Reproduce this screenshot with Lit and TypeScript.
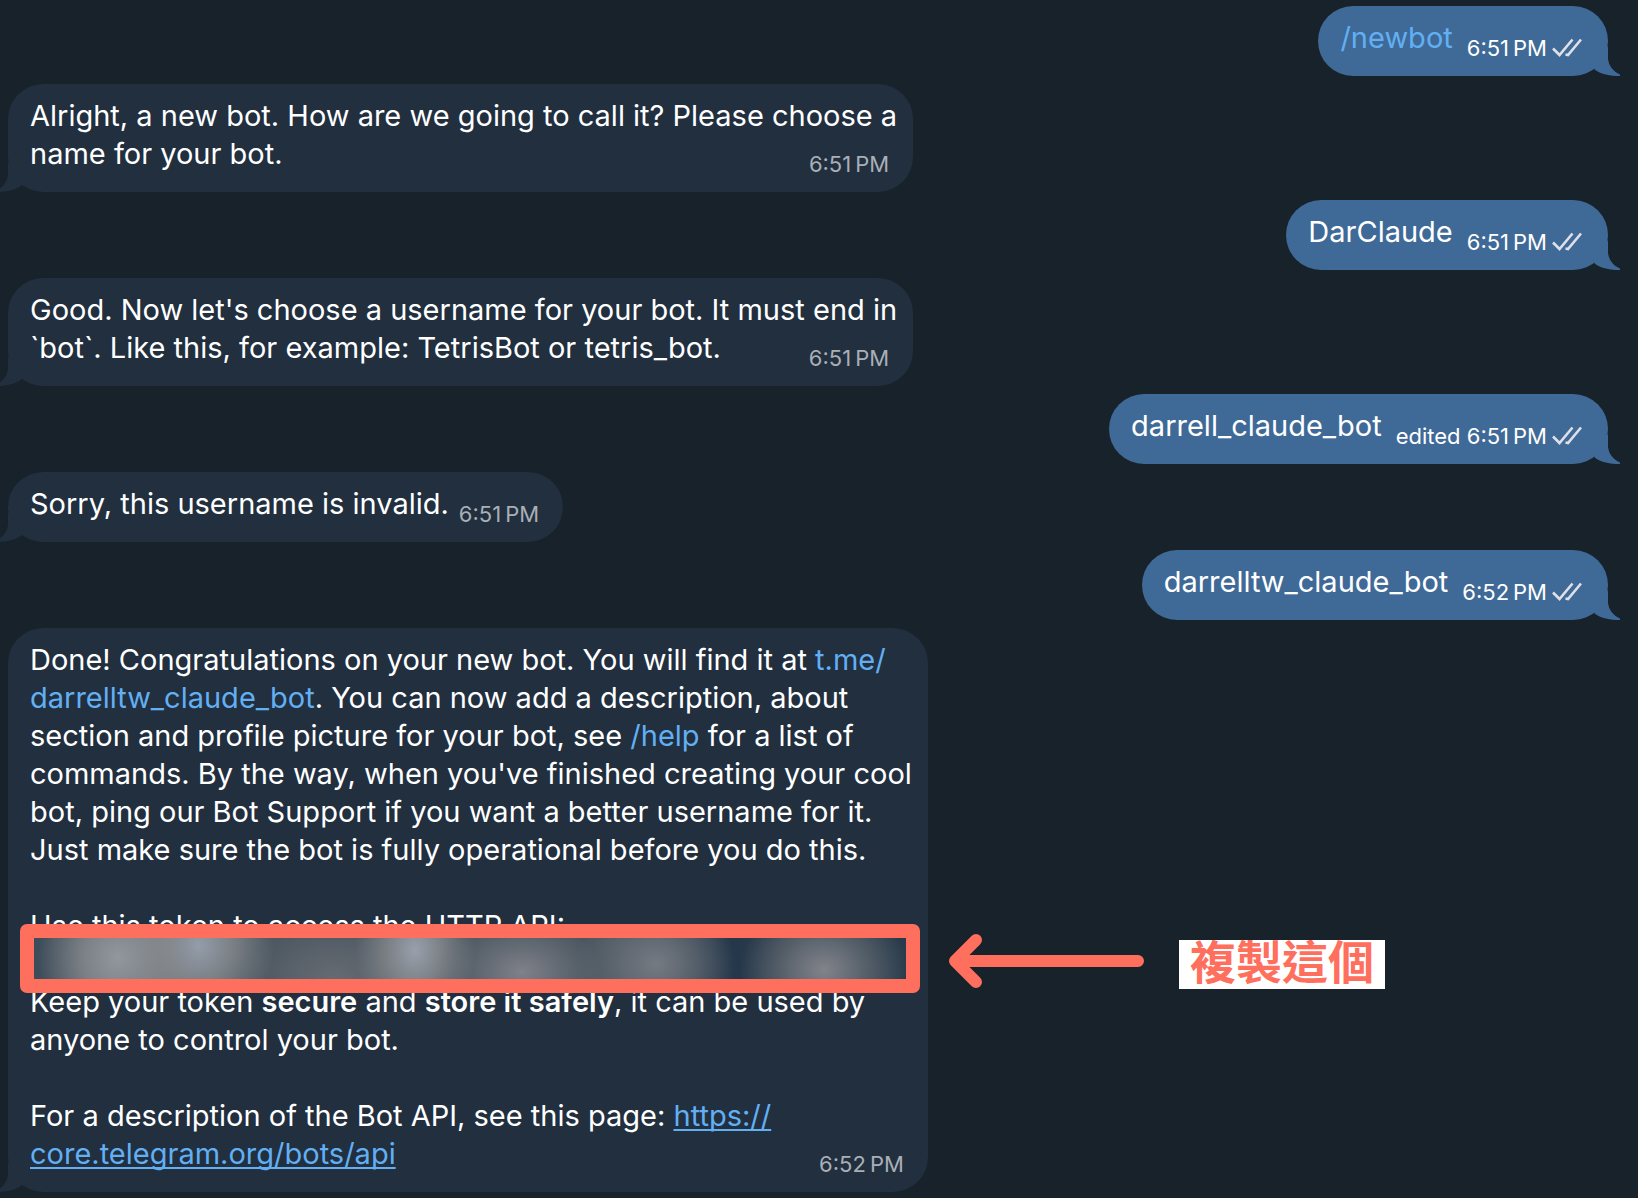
import { LitElement, html, css, svg, nothing, TemplateResult } from "lit";
import { customElement, property } from "lit/decorators.js";

@customElement("chat-message")
class ChatMessage extends LitElement {
  @property() side: "in" | "out" = "in";
  @property() time = "";
  @property({ type: Boolean }) edited = false;
  @property({ type: Boolean }) multiline = false;

  static styles = css`
    :host {
      display: flex;
    }
    :host([side="out"]) {
      justify-content: flex-end;
    }
    .bubble {
      position: relative;
      display: flex;
      gap: 10px;
      padding: 13px 22px 19px;
      border-radius: 35px;
      background: #212f3f;
      color: #fff;
    }
    .bubble.out {
      gap: 14px;
      background: #3f6a97;
    }
    .bubble.multiline {
      display: grid;
      padding-right: 16px;
    }
    .multiline .body,
    .multiline .meta {
      grid-area: 1 / 1;
    }
    .meta {
      display: flex;
      align-items: center;
      align-self: end;
      justify-self: end;
      gap: 5px;
      padding-right: 2px;
      font-size: 22px;
      line-height: 24px;
      white-space: nowrap;
      color: #a9afb6;
      transform: translateY(3px);
    }
    .multiline .meta {
      padding-right: 8px;
    }
    .out .meta {
      padding-right: 4px;
      color: #fff;
    }
    .checks {
      width: 30px;
      height: 20px;
      fill: none;
      stroke: #dfdfe8;
      stroke-width: 2.600;
    }
    .tail {
      position: absolute;
      bottom: 0;
      left: -12px;
      width: 30px;
      height: 30px;
      fill: #212f3f;
      transform: scaleX(-1);
    }
    .out .tail {
      left: auto;
      right: -12px;
      fill: #3f6a97;
      transform: none;
    }
  `;

  render() {
    const kind = `bubble ${this.side}${this.multiline ? " multiline" : ""}`;
    return html`
      <article class=${kind}>
        <svg class="tail" viewBox="0 0 30 30" aria-hidden="true">
          <path d="M18 0V13C19 20 23 25.500 30 28.500V30C20 30 11 28.500 4 23L10 12Z" />
        </svg>
        <div class="body"><slot></slot></div>
        <div class="meta">
          <span>${this.edited ? "edited " : nothing}<time>${this.time}</time></span>
          ${this.side === "out"
            ? html`<svg class="checks" viewBox="0 0 30 20" role="img" aria-label="Read">
                ${svg`<path d="M1 10.500L7.500 17L20.500 1.500M13.500 16.500L16 17L29 1.500" />`}
              </svg>`
            : nothing}
        </div>
      </article>
    `;
  }
}

interface Message {
  side: "in" | "out";
  time: string;
  body: TemplateResult;
  edited?: boolean;
  multiline?: boolean;
}

@customElement("app-root")
class AppRoot extends LitElement {
  static styles = css`
    :host {
      display: block;
      font-family: Inter, "Noto Sans CJK TC", sans-serif;
      font-size: 29px;
      line-height: 38px;
    }
    .chat {
      display: flex;
      flex-direction: column;
      gap: 8px;
      min-height: 100vh;
      box-sizing: border-box;
      padding: 6px 30px 6px 8px;
      background: #17222b;
      overflow: hidden;
    }
    p {
      margin: 0;
      white-space: nowrap;
    }
    p + p {
      margin-top: 38px;
    }
    a {
      color: #62b0f3;
      text-decoration: none;
    }
    a.url {
      text-decoration: underline 2px;
      text-decoration-skip-ink: none;
      text-underline-offset: 3px;
    }
    b {
      font-weight: 600;
    }
    .token {
      position: relative;
      display: block;
      height: 38px;
    }
    .callout {
      position: absolute;
      top: -21px;
      left: -10px;
      display: flex;
      align-items: center;
    }
    .frame {
      box-sizing: border-box;
      width: 900px;
      height: 69px;
      border: 14px solid #ff6f5e;
      border-radius: 7px;
      background:
        radial-gradient(80px 90px at 84px 20px, #92979f, #8b8e92c0 45%, #8b8e9200),
        radial-gradient(76px 80px at 164px 8px, #949daa, #8b8e92c0 45%, #8b8e9200),
        radial-gradient(60px 80px at 381px 12px, #98a0ac, #8b8e92c0 45%, #8b8e9200),
        radial-gradient(90px 60px at 300px 40px, #666b72, #636a7300),
        radial-gradient(80px 56px at 488px 34px, #80818a, #70757ca0 50%, #70757c00),
        radial-gradient(80px 70px at 622px 26px, #767a82, #6a7178a0 50%, #6a717800),
        radial-gradient(84px 70px at 790px 32px, #82838b, #6e747ba0 50%, #6e747b00),
        linear-gradient(90deg, #3c4c5a, #4c5761 8%, #48545f 68%, #24364a 80%, #34434f 88%, #283a4b);
      background-origin: padding-box;
      background-clip: border-box;
    }
    .arrow {
      width: 198px;
      height: 56px;
      margin: 4px 0 0 28px;
      fill: none;
      stroke: #ff6f5e;
      stroke-width: 12;
      stroke-linecap: round;
      stroke-linejoin: round;
    }
    .label {
      height: 49px;
      margin: 12px 0 0 33px;
      padding: 0 11px;
      overflow: hidden;
      background: #fff;
      color: #ff6f5e;
      font-family: "Noto Sans CJK TC", sans-serif;
      font-size: 46px;
      font-weight: 700;
      line-height: 38px;
    }
  `;

  private messages: Message[] = [
    { side: "out", time: "6:51\u202fPM", body: html`<p><a href="#newbot">/newbot</a></p>` },
    {
      side: "in",
      time: "6:51\u202fPM",
      multiline: true,
      body: html`<p>
        Alright, a new bot. How are we going to call it? Please choose a<br />name for your bot.
      </p>`,
    },
    { side: "out", time: "6:51\u202fPM", body: html`<p>DarClaude</p>` },
    {
      side: "in",
      time: "6:51\u202fPM",
      multiline: true,
      body: html`<p>
        Good. Now let's choose a username for your bot. It must end in<br />\`bot\`. Like this, for
        example: TetrisBot or tetris_bot.
      </p>`,
    },
    { side: "out", time: "6:51\u202fPM", edited: true, body: html`<p>darrell_claude_bot</p>` },
    { side: "in", time: "6:51\u202fPM", body: html`<p>Sorry, this username is invalid.</p>` },
    { side: "out", time: "6:52\u202fPM", body: html`<p>darrelltw_claude_bot</p>` },
    {
      side: "in",
      time: "6:52\u202fPM",
      multiline: true,
      body: html`
        <p>
          Done! Congratulations on your new bot. You will find it at
          <a href="#bot">t.me/<br />darrelltw_claude_bot</a>. You can now add a description, about<br />section
          and profile picture for your bot, see <a href="#help">/help</a> for a list of<br />commands.
          By the way, when you've finished creating your cool<br />bot, ping our Bot Support if you
          want a better username for it.<br />Just make sure the bot is fully operational before you
          do this.
        </p>
        <p>
          Use this token to access the HTTP API:
          <span class="token">
            <span class="callout">
              <span class="frame"></span>
              <svg class="arrow" viewBox="0 0 198 56" aria-hidden="true">
                <path d="M190 28H8M28 7L7 28L28 49" />
              </svg>
              <span class="label" lang="zh-Hant">複製這個</span>
            </span>
          </span>
          Keep your token <b>secure</b> and <b>store it safely</b>, it can be used by<br />anyone to
          control your bot.
        </p>
        <p>
          For a description of the Bot API, see this page:
          <a class="url" href="#api">https://<br />core.telegram.org/bots/api</a>
        </p>
      `,
    },
  ];

  render() {
    return html`
      <main class="chat">
        ${this.messages.map(
          (m) => html`<chat-message
            side=${m.side}
            .time=${m.time}
            .edited=${m.edited ?? false}
            .multiline=${m.multiline ?? false}
            >${m.body}</chat-message
          >`
        )}
      </main>
    `;
  }
}
